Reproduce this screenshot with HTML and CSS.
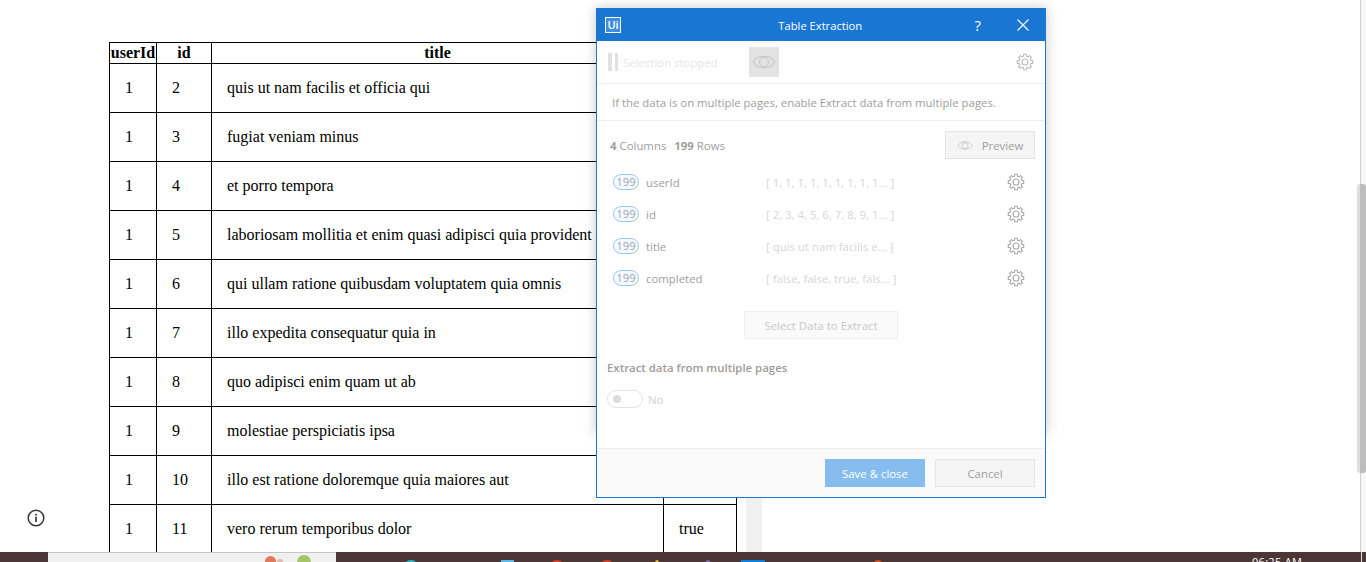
FILE: index.html
```html
<!DOCTYPE html>
<html lang="en">
<head>
    <meta charset="UTF-8">
    <meta name="viewport" content="width=device-width, initial-scale=1.0">
    <title>Table Extraction</title>
    <link rel="stylesheet" href="styles.css">
</head>
<body>
<svg class="defs" width="0" height="0">
    <symbol id="gear" viewBox="0 0 24 24">
        <polygon points="10.06,4.24 10.18,1.66 13.82,1.66 13.94,4.24 16.12,5.14 18.02,3.4 20.6,5.98 18.86,7.88 19.76,10.06 22.34,10.18 22.34,13.82 19.76,13.94 18.86,16.12 20.6,18.02 18.02,20.6 16.12,18.86 13.94,19.76 13.82,22.34 10.18,22.34 10.06,19.76 7.88,18.86 5.98,20.6 3.4,18.02 5.14,16.12 4.24,13.94 1.66,13.82 1.66,10.18 4.24,10.06 5.14,7.88 3.4,5.98 5.98,3.4 7.88,5.14" fill="none" stroke="currentColor" stroke-width="1.5" stroke-linejoin="round"/>
        <circle cx="12" cy="12" r="4" fill="none" stroke="currentColor" stroke-width="1.5"/>
    </symbol>
    <symbol id="eye" viewBox="0 0 24 16">
        <path d="M1 8C6 0.5 18 0.5 23 8C18 15.5 6 15.5 1 8Z" fill="none" stroke="currentColor" stroke-width="1.2"/>
        <circle cx="12" cy="8" r="4.5" fill="none" stroke="currentColor" stroke-width="1.2"/>
    </symbol>
</svg>

<div class="page">
    <div class="content">
        <table class="data">
            <thead>
                <tr><th class="col-user">userId</th><th class="col-id">id</th><th class="col-title">title</th><th class="col-done">completed</th></tr>
            </thead>
            <tbody>
                <tr><td>1</td><td>2</td><td>quis ut nam facilis et officia qui</td><td>false</td></tr>
                <tr><td>1</td><td>3</td><td>fugiat veniam minus</td><td>false</td></tr>
                <tr><td>1</td><td>4</td><td>et porro tempora</td><td>true</td></tr>
                <tr><td>1</td><td>5</td><td>laboriosam mollitia et enim quasi adipisci quia provident illum</td><td>false</td></tr>
                <tr><td>1</td><td>6</td><td>qui ullam ratione quibusdam voluptatem quia omnis</td><td>false</td></tr>
                <tr><td>1</td><td>7</td><td>illo expedita consequatur quia in</td><td>false</td></tr>
                <tr><td>1</td><td>8</td><td>quo adipisci enim quam ut ab</td><td>true</td></tr>
                <tr><td>1</td><td>9</td><td>molestiae perspiciatis ipsa</td><td>false</td></tr>
                <tr><td>1</td><td>10</td><td>illo est ratione doloremque quia maiores aut</td><td>false</td></tr>
                <tr><td>1</td><td>11</td><td>vero rerum temporibus dolor</td><td>true</td></tr>
            </tbody>
        </table>
        <div class="strip"></div>
    </div>
    <div class="scrollbar"><div class="thumb"></div></div>

    <svg class="info" viewBox="0 0 18 18" width="18" height="18">
        <circle cx="9" cy="9" r="7.8" fill="none" stroke="#333" stroke-width="1.5"/>
        <rect x="8.2" y="7.8" width="1.7" height="5.2" fill="#333"/>
        <rect x="8.2" y="4.8" width="1.7" height="1.7" fill="#333"/>
    </svg>

    <div class="dialog-shadow"></div>
    <div class="dialog">
        <div class="titlebar">
            <span class="logo">Ui</span>
            <span class="dialog-title">Table Extraction</span>
            <span class="help">?</span>
            <svg class="close" viewBox="0 0 12 12" width="12" height="12">
                <path d="M0.5 0.5L11.5 11.5M11.5 0.5L0.5 11.5" stroke="#fff" stroke-width="1.1"/>
            </svg>
        </div>

        <div class="toolbar">
            <span class="pause"><i></i><i></i></span>
            <span class="stopped">Selection stopped</span>
            <span class="eye-box"><svg width="24" height="16" class="eye-icon"><use href="#eye"/></svg></span>
            <svg class="gear gear-top" width="18" height="18"><use href="#gear"/></svg>
        </div>

        <p class="hint">If the data is on multiple pages, enable Extract data from multiple pages.</p>

        <div class="summary">
            <span class="counts"><b>4</b> Columns <b class="rows">199</b> Rows</span>
            <button class="btn preview"><svg width="16" height="11" class="eye-small"><use href="#eye"/></svg>Preview</button>
        </div>

        <ul class="columns">
            <li><span class="badge">199</span><span class="name">userId</span><span class="sample">[ 1, 1, 1, 1, 1, 1, 1, 1, 1... ]</span><svg class="gear" width="18" height="18"><use href="#gear"/></svg></li>
            <li><span class="badge">199</span><span class="name">id</span><span class="sample">[ 2, 3, 4, 5, 6, 7, 8, 9, 1... ]</span><svg class="gear" width="18" height="18"><use href="#gear"/></svg></li>
            <li><span class="badge">199</span><span class="name">title</span><span class="sample">[ quis ut nam facilis e... ]</span><svg class="gear" width="18" height="18"><use href="#gear"/></svg></li>
            <li><span class="badge">199</span><span class="name">completed</span><span class="sample">[ false, false, true, fals... ]</span><svg class="gear" width="18" height="18"><use href="#gear"/></svg></li>
        </ul>

        <div class="select-row"><button class="btn select">Select Data to Extract</button></div>

        <h2 class="pages-title">Extract data from multiple pages</h2>
        <div class="toggle-row">
            <span class="toggle"><i></i></span>
            <span class="toggle-label">No</span>
        </div>

        <div class="footer">
            <button class="btn save">Save &amp; close</button>
            <button class="btn cancel">Cancel</button>
        </div>
    </div>
</div>

<div class="taskbar">
    <div class="window">
        <i class="fruit fruit-red"></i>
        <i class="fruit fruit-pink"></i>
        <i class="fruit fruit-green"></i>
    </div>
    <i class="tray tray-teal"></i>
    <i class="tray tray-sky"></i>
    <i class="tray tray-red"></i>
    <i class="tray tray-red2"></i>
    <i class="tray tray-yellow"></i>
    <i class="tray tray-purple"></i>
    <i class="tray tray-blue"></i>
    <i class="tray tray-orange"></i>
    <span class="clock">06:25 AM</span>
    <span class="edge"></span>
</div>
</body>
</html>
```

FILE: styles.css
```css
html, body {
    height: 100%;
}
body {
    margin: 0;
    height: 562px;
    overflow: hidden;
    display: flex;
    flex-direction: column;
    background: #fff;
    font-family: "Liberation Serif", serif;
}
.defs {
    position: absolute;
}
.page {
    position: relative;
    flex: 1;
    min-height: 0;
    display: flex;
    overflow: hidden;
}
.content {
    flex: 1;
    display: flex;
    gap: 9px;
    padding: 42px 0 0 109px;
    min-height: 0;
}

/* table behind the dialog */
.data {
    border-collapse: collapse;
    table-layout: fixed;
    width: 627px;
    flex-shrink: 0;
    align-self: flex-start;
    font-size: 16px;
    color: #000;
}
.data th, .data td {
    border: 1px solid #000;
    box-sizing: border-box;
}
.data th {
    padding: 1px 0;
    line-height: 18px;
    height: 21px;
}
.data td {
    padding: 15px;
    line-height: 18px;
    white-space: nowrap;
    overflow: hidden;
}
.col-user { width: 47px; }
.col-id { width: 55px; }
.col-title { width: 452px; }
.col-done { width: 73px; }

.strip {
    width: 16px;
    background: #f0f0f0;
}
.scrollbar {
    position: relative;
    width: 6px;
    background: #f6f6f6;
    border-left: 1px solid #d0d0d0;
    box-sizing: border-box;
}
.thumb {
    position: absolute;
    top: 184px;
    left: -4px;
    width: 9px;
    height: 289px;
    border-radius: 3px;
    background: #bdbdbd;
    border-left: 3px solid #dedede;
    box-sizing: border-box;
}
.info {
    position: absolute;
    left: 27px;
    top: 509px;
}

/* dialog */
.dialog-shadow {
    position: absolute;
    left: 596px;
    top: 8px;
    width: 450px;
    height: 427px;
    box-shadow: 0 0 12px rgba(0, 0, 0, 0.22);
}
.dialog {
    position: absolute;
    left: 596px;
    top: 8px;
    width: 450px;
    height: 490px;
    box-sizing: border-box;
    border: 1px solid #1976d2;
    background: #fff;
    display: flex;
    flex-direction: column;
    font-family: "Open Sans", sans-serif;
    font-size: 11.4px;
    color: #9e9e9e;
}
.titlebar {
    height: 32px;
    flex-shrink: 0;
    display: flex;
    align-items: center;
    background: #1976d2;
    color: #fff;
    padding: 0 16px 0 8px;
}
.logo {
    width: 14px;
    height: 14px;
    border: 1px solid #fff;
    background: #3f8fdd;
    font-size: 11px;
    line-height: 14px;
    text-align: center;
    font-weight: 600;
}
.dialog-title {
    flex: 1;
    text-align: center;
    font-size: 11.2px;
    padding-left: 45px;
}
.help {
    font-size: 15px;
    margin-right: 36px;
}
.toolbar {
    height: 43px;
    flex-shrink: 0;
    box-sizing: border-box;
    display: flex;
    align-items: center;
    padding: 0 11px;
    border-bottom: 1px solid #eee;
}
.pause {
    display: flex;
    gap: 3px;
}
.pause i {
    width: 3.5px;
    height: 18px;
    background: #e2e2e2;
}
.stopped {
    margin-left: 5px;
    width: 126px;
    font-size: 11.4px;
    color: #e6e6e6;
}
.eye-box {
    width: 30px;
    height: 30px;
    background: #e3e3e3;
    display: flex;
    align-items: center;
    justify-content: center;
}
.eye-icon {
    color: #c8c8c8;
}
.gear {
    color: #ababab;
    flex-shrink: 0;
}
.gear-top {
    margin-left: auto;
    color: #bdbdbd;
}
.hint {
    margin: 0;
    height: 37px;
    flex-shrink: 0;
    box-sizing: border-box;
    padding-left: 15px;
    line-height: 38px;
    border-bottom: 1px solid #eee;
}
.summary {
    display: flex;
    align-items: center;
    justify-content: space-between;
    padding: 10px 10px 0 13px;
    height: 28px;
    flex-shrink: 0;
}
.counts b {
    font-weight: 700;
}
.rows {
    margin-left: 5px;
}
.btn {
    box-sizing: border-box;
    height: 28px;
    border: 1px solid #e4e4e4;
    background: #f5f5f5;
    font-family: inherit;
    font-size: 11.4px;
    color: #9e9e9e;
    padding: 0;
}
.preview {
    width: 90px;
    display: flex;
    align-items: center;
    justify-content: center;
    gap: 9px;
}
.eye-small {
    color: #c4c4c4;
}
.columns {
    list-style: none;
    margin: 7px 0 0;
    padding: 0 20px 0 16px;
}
.columns li {
    height: 32px;
    display: flex;
    align-items: center;
}
.badge {
    box-sizing: border-box;
    width: 26px;
    height: 16px;
    border: 1px solid #9cc6ef;
    border-radius: 8px;
    line-height: 14px;
    text-align: center;
    color: #9aa8b8;
    background: #f6faff;
}
.name {
    margin-left: 7px;
    width: 120px;
}
.sample {
    flex: 1;
    color: #d6d6d6;
}
.select-row {
    display: flex;
    justify-content: center;
    margin-top: 17px;
}
.select {
    width: 154px;
    background: #fafafa;
    color: #c9c9c9;
    border-color: #eee;
}
.pages-title {
    margin: 20px 0 0 10px;
    font-size: 11.4px;
    line-height: 18px;
    font-weight: 600;
    color: #a09a9a;
}
.toggle-row {
    display: flex;
    align-items: center;
    margin: 13px 0 0 10px;
}
.toggle {
    box-sizing: border-box;
    width: 36px;
    height: 18px;
    border: 1px solid #e4e4e4;
    border-radius: 9px;
    display: flex;
    align-items: center;
    padding-left: 5px;
}
.toggle i {
    width: 8px;
    height: 8px;
    border-radius: 50%;
    background: #dcdcdc;
}
.toggle-label {
    margin-left: 5px;
    color: #d0d0d0;
}
.footer {
    margin-top: auto;
    height: 49px;
    box-sizing: border-box;
    flex-shrink: 0;
    display: flex;
    justify-content: flex-end;
    align-items: center;
    gap: 10px;
    padding-right: 10px;
    background: #fafafa;
    border-top: 1px solid #eee;
}
.save {
    width: 100px;
    background: #86bdee;
    border: none;
    color: #fff;
}
.cancel {
    width: 100px;
}

/* desktop taskbar, only its top edge is in view */
.taskbar {
    height: 10px;
    flex-shrink: 0;
    display: flex;
    overflow: hidden;
    background: #4d3636;
}
.window {
    position: relative;
    width: 288px;
    height: 10px;
    margin-left: 48px;
    box-sizing: border-box;
    background: #f0f0f0;
    border-top: 1px solid #c4c4c4;
}
.fruit {
    position: absolute;
    border-radius: 50%;
}
.fruit-red { left: 217px; top: 3px; width: 11px; height: 11px; background: #e0785a; }
.fruit-pink { left: 229px; top: 6px; width: 6px; height: 6px; background: #e8b8b0; }
.fruit-green { left: 249px; top: 2px; width: 14px; height: 14px; background: #a5c46a; }
.tray {
    flex-shrink: 0;
    width: 16px;
    height: 16px;
    margin-top: 8px;
    border-radius: 50%;
}
.tray-teal { margin-left: 67px; background: #2cb5c5; }
.tray-sky { margin-left: 82px; width: 13px; border-radius: 0; background: #5cb8e8; }
.tray-red { margin-left: 35px; background: #d9402f; }
.tray-red2 { margin-left: 34px; background: #d9402f; }
.tray-yellow { margin-left: 39px; width: 6px; background: #e8c83a; }
.tray-purple { margin-left: 44px; width: 8px; background: #7a6cb0; }
.tray-blue { margin-left: 29px; width: 24px; border-radius: 0; background: #0f7fdc; }
.tray-orange { margin-left: 107px; width: 12px; background: #d8502c; }
.clock {
    margin-left: 368px;
    margin-top: 3px;
    font-family: "Open Sans", sans-serif;
    font-size: 11px;
    line-height: 14px;
    white-space: nowrap;
    letter-spacing: 0.3px;
    color: #fff;
}
.edge {
    margin-left: 59px;
    width: 1px;
    background: #ddd;
}
```
